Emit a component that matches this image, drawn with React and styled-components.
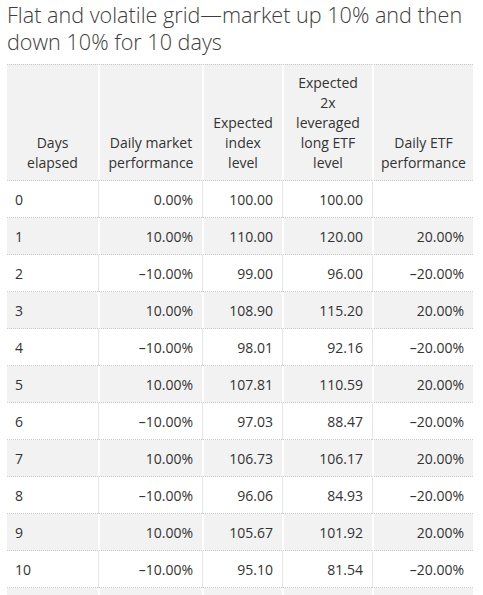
import React from "react";
import styled, { createGlobalStyle } from "styled-components";

const Global = createGlobalStyle`
  html, body { margin: 0; padding: 0; background: #fff; }
  body { font-family: "Open Sans", "Noto Sans", sans-serif; color: #333; }
`;

const Page = styled.div`
  padding: 1px 10px 0 7px;
`;

const Title = styled.h2`
  margin: 0 0 9px 0;
  font-weight: 300;
  font-size: 21.6px;
  line-height: 27px;
  color: #3d3d3d;
`;

const Table = styled.table`
  width: 466px;
  border-collapse: separate;
  border-spacing: 0;
  font-size: 14px;
  color: #333;
  table-layout: fixed;
`;

const Th = styled.th`
  background: #f2f2f2;
  font-weight: 400;
  text-align: center;
  vertical-align: bottom;
  line-height: 20px;
  padding: 8px 4px 7px;
  border-top: 1px dotted #c9c9c9;
  border-bottom: 1px dotted #c9c9c9;
  border-left: ${(p) => (p.$first ? "0" : "2px solid #fff")};
`;

const Td = styled.td`
  height: 37px;
  padding: 0 9px 0 8px;
  text-align: ${(p) => (p.$left ? "left" : "right")};
  background: ${(p) => (p.$alt ? "#f2f2f2" : "#fff")};
  border-bottom: 1px dotted #c9c9c9;
  border-left: ${(p) =>
    p.$first ? "0" : p.$alt ? "2px solid #fff" : "1px solid #e6e6e6"};
  box-sizing: border-box;
  white-space: nowrap;
`;

const rows = [
  ["0", "0.00%", "100.00", "100.00", ""],
  ["1", "10.00%", "110.00", "120.00", "20.00%"],
  ["2", "\u201310.00%", "99.00", "96.00", "\u201320.00%"],
  ["3", "10.00%", "108.90", "115.20", "20.00%"],
  ["4", "\u201310.00%", "98.01", "92.16", "\u201320.00%"],
  ["5", "10.00%", "107.81", "110.59", "20.00%"],
  ["6", "\u201310.00%", "97.03", "88.47", "\u201320.00%"],
  ["7", "10.00%", "106.73", "106.17", "20.00%"],
  ["8", "\u201310.00%", "96.06", "84.93", "\u201320.00%"],
  ["9", "10.00%", "105.67", "101.92", "20.00%"],
  ["10", "\u201310.00%", "95.10", "81.54", "\u201320.00%"],
  ["", "", "", "", ""],
];

const widths = [91, 104, 80, 90, 101];

export default function App() {
  return (
    <>
      <Global />
      <Page>
        <Title>Flat and volatile grid—market up 10% and then down 10% for 10 days</Title>
        <Table>
          <colgroup>
            {widths.map((w, i) => (
              <col key={i} style={{ width: w }} />
            ))}
          </colgroup>
          <thead>
            <tr>
              <Th $first>Days<br />elapsed</Th>
              <Th>Daily market<br />performance</Th>
              <Th>Expected<br />index<br />level</Th>
              <Th>Expected<br />2x<br />leveraged<br />long ETF<br />level</Th>
              <Th>Daily ETF<br />performance</Th>
            </tr>
          </thead>
          <tbody>
            {rows.map((r, i) => (
              <tr key={i}>
                {r.map((c, j) => (
                  <Td key={j} $alt={i % 2 === 1} $first={j === 0} $left={j === 0}>
                    {c}
                  </Td>
                ))}
              </tr>
            ))}
          </tbody>
        </Table>
      </Page>
    </>
  );
}
